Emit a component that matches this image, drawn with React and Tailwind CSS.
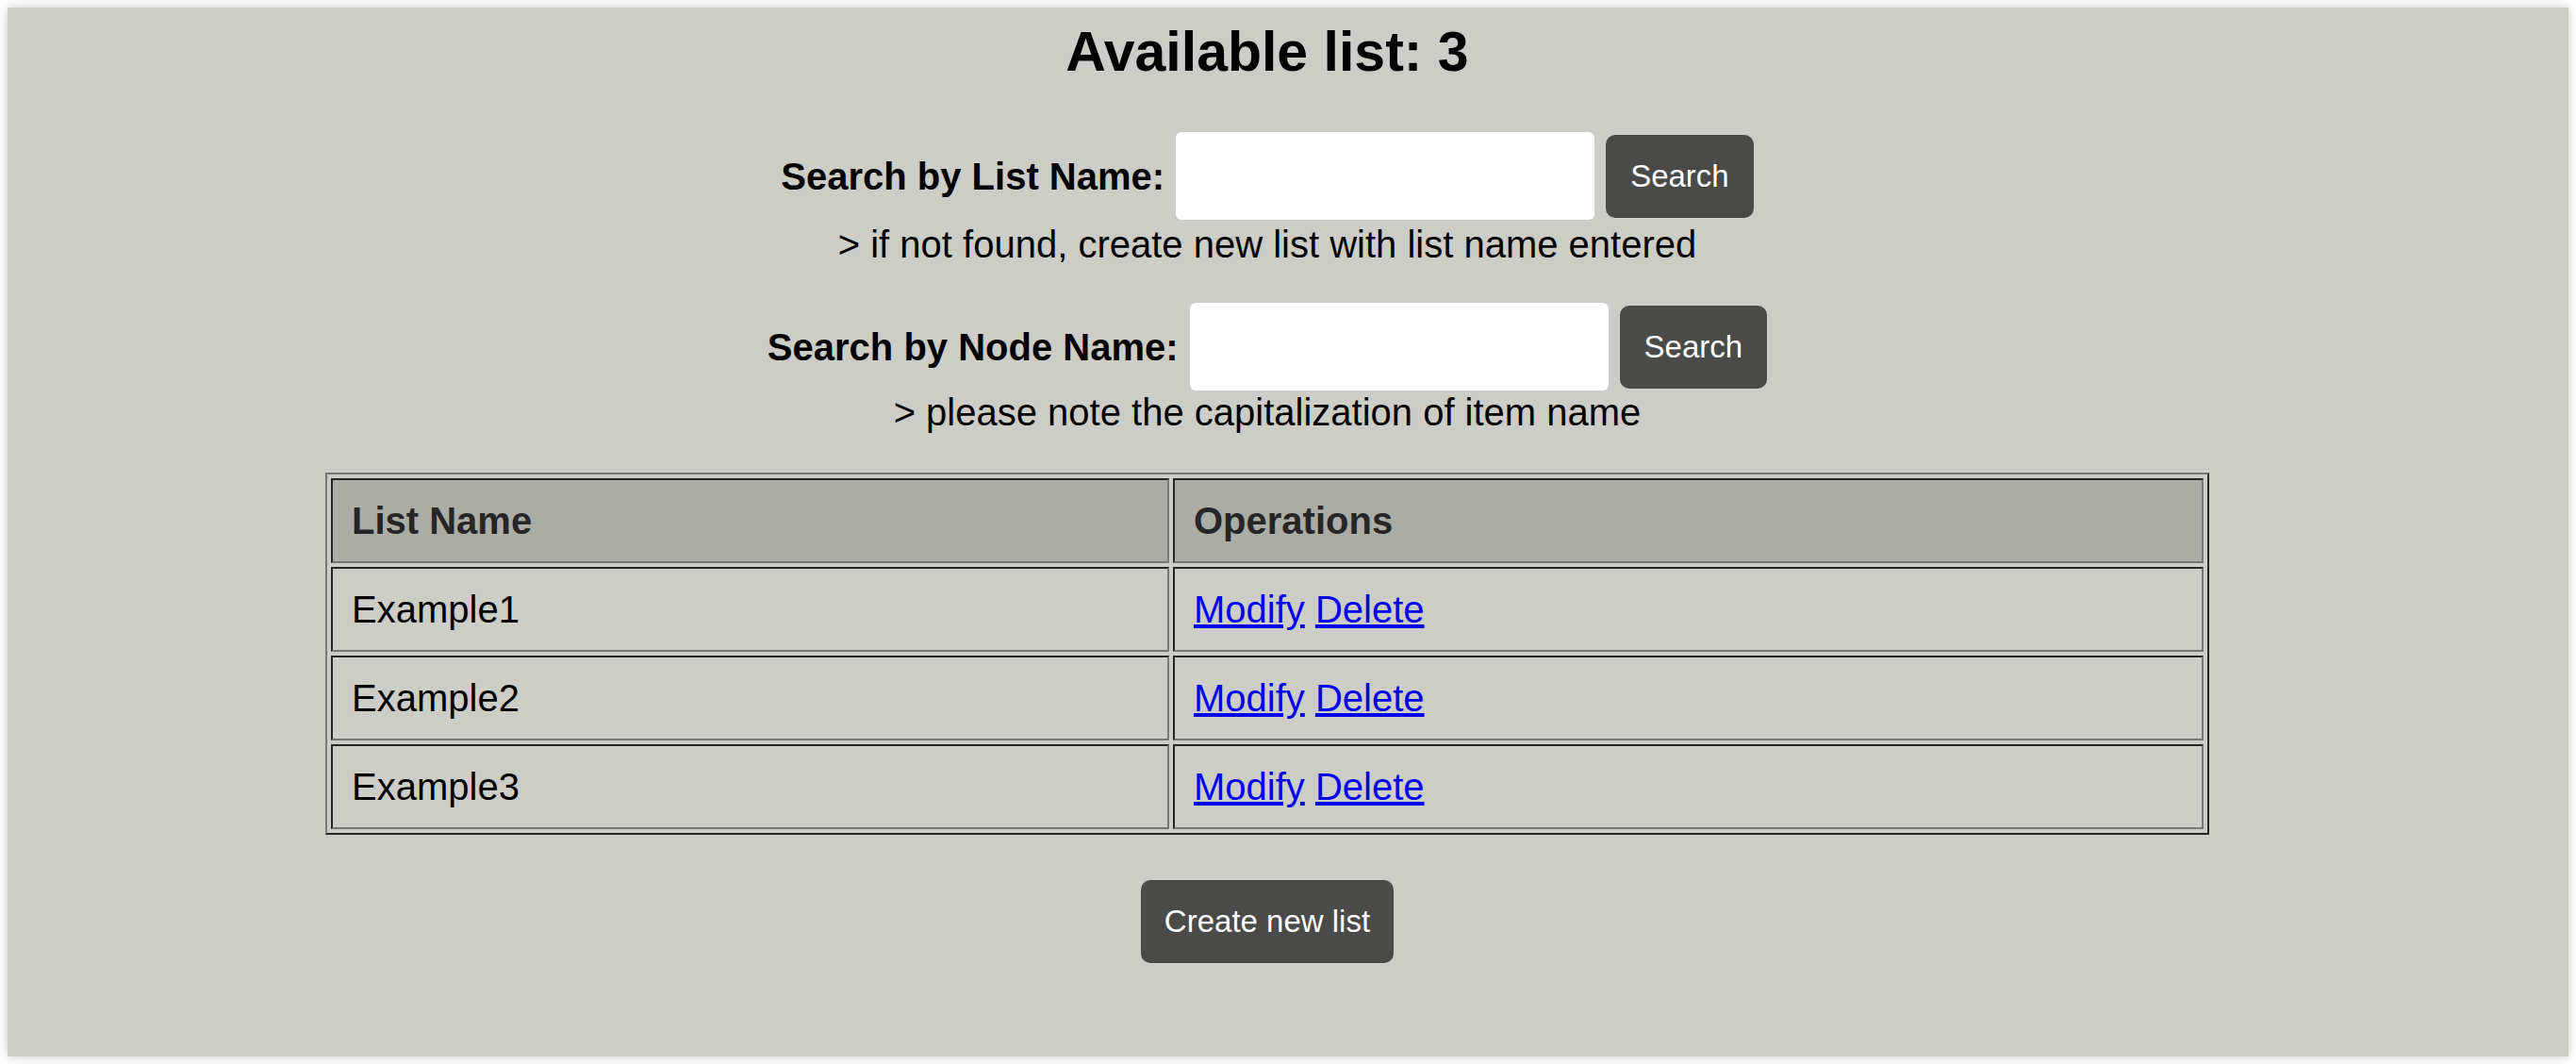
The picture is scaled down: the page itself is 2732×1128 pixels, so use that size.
import React, { useState } from "react";

const lists = [
  { id: 1, name: "Example1" },
  { id: 2, name: "Example2" },
  { id: 3, name: "Example3" },
];

const cellBorder = "border-2 border-t-[#262626] border-l-[#262626] border-b-[#777775] border-r-[#777775]";

const App = () => {
  const [listName, setListName] = useState("");
  const [nodeName, setNodeName] = useState("");

  return (
    <div className="bg-white h-[1128px] p-2 font-['Liberation_Sans',Arial,sans-serif] text-black">
      <section className="h-full bg-[#cccdc7] shadow-[0_0_10px_rgba(0,0,0,0.22)] pt-[14px] pr-[44px] flex flex-col items-center">
        <h1 className="text-[59px] leading-[66px] font-bold">Available list: {lists.length}</h1>

        <SearchRow
          className="mt-[52px]"
          label="Search by List Name:"
          value={listName}
          onChange={setListName}
        />
        <p className="mt-[3px] text-[40px] leading-[46px]">&gt; if not found, create new list with list name entered</p>

        <SearchRow
          className="mt-[39px]"
          label="Search by Node Name:"
          value={nodeName}
          onChange={setNodeName}
        />
        <p className="text-[40px] leading-[46px]">&gt; please note the capitalization of item name</p>

        <table className="mt-[41px] w-[1998px] table-fixed border-separate border-spacing-[4px] border-2 border-t-[#777775] border-l-[#777775] border-b-[#262626] border-r-[#262626] text-[40px] leading-[46px]">
          <thead>
            <tr>
              <th className={`${cellBorder} w-[889px] bg-[#abaca6] text-[#262626] text-left font-bold p-[20px]`}>List Name</th>
              <th className={`${cellBorder} bg-[#abaca6] text-[#262626] text-left font-bold p-[20px]`}>Operations</th>
            </tr>
          </thead>
          <tbody>
            {lists.map((list) => (
              <tr key={list.id}>
                <td className={`${cellBorder} p-[20px]`}>{list.name}</td>
                <td className={`${cellBorder} p-[20px]`}>
                  <a href="#" className="text-[#0000ee] underline">Modify</a>{" "}
                  <a href="#" className="text-[#0000ee] underline">Delete</a>
                </td>
              </tr>
            ))}
          </tbody>
        </table>

        <button className="mt-[48px] h-[88px] px-[25px] rounded-[10px] bg-[#4a4a48] text-white text-[33px]">
          Create new list
        </button>
      </section>
    </div>
  );
};

const SearchRow = ({ className, label, value, onChange }) => {
  return (
    <div className={`flex items-center gap-3 ${className}`}>
      <label className="text-[40px] leading-[46px] font-bold">{label}</label>
      <input
        value={value}
        onChange={(e) => onChange(e.target.value)}
        className="w-[444px] h-[93px] bg-white rounded-[6px] outline-none px-3 text-[33px]"
      />
      <button className="h-[88px] px-[26px] rounded-[10px] bg-[#4a4a48] text-white text-[33px]">Search</button>
    </div>
  );
};

export default App;
